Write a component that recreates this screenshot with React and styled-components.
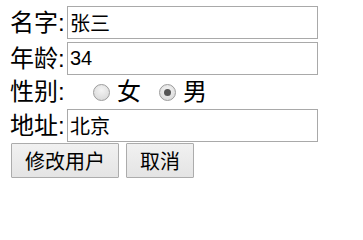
import React from 'react';
import styled, { createGlobalStyle } from 'styled-components';

const GlobalStyle = createGlobalStyle`
  body {
    margin: 0;
    background: #ffffff;
    font-family: "Liberation Sans", "Noto Sans CJK SC", sans-serif;
    color: #000000;
  }
`;

const Form = styled.form`
  display: flex;
  flex-direction: column;
  padding: 6px 0 0 10px;
`;

const Row = styled.div`
  display: flex;
  align-items: center;
  height: ${(p) => p.h || 33}px;
  margin-top: ${(p) => p.gap || 0}px;
`;

const Label = styled.span`
  width: 57px;
  font-size: 24px;
  line-height: 1;
  white-space: nowrap;
`;

const TextInput = styled.input`
  box-sizing: border-box;
  width: 251px;
  height: 33px;
  margin: 0;
  padding: 1px 2px;
  border: 1px solid #a9a9a9;
  font-family: "Liberation Sans", "Noto Sans CJK SC", sans-serif;
  font-size: 20px;
  color: #000000;
  outline: none;
`;

const Radio = styled.input`
  appearance: none;
  box-sizing: border-box;
  width: 17px;
  height: 17px;
  margin: 0 7px 0 ${(p) => p.offset}px;
  border-radius: 50%;
  border: 1px solid #9c9c9c;
  background: radial-gradient(circle at 50% 35%, #f4f4f4, #d4d4d4);
  display: grid;
  place-items: center;

  &:checked::after {
    content: '';
    width: 7px;
    height: 7px;
    border-radius: 50%;
    background: #555555;
  }
`;

const Choice = styled.span`
  font-size: 24px;
  line-height: 1;
`;

const Actions = styled.div`
  display: flex;
  gap: 7px;
  margin-top: 1px;
  padding-left: 1px;
`;

const Button = styled.button`
  box-sizing: border-box;
  height: 35px;
  padding: 0 13px;
  border: 1px solid #acacac;
  border-radius: 1px;
  background: linear-gradient(#f1f1f1, #e4e4e4);
  font-family: "Liberation Sans", "Noto Sans CJK SC", sans-serif;
  font-size: 20px;
  color: #000000;
`;

export default function App() {
  return (
    <>
      <GlobalStyle />
      <Form onSubmit={(e) => e.preventDefault()}>
        <Row>
          <Label>名字:</Label>
          <TextInput defaultValue="张三" />
        </Row>
        <Row gap={3}>
          <Label>年龄:</Label>
          <TextInput defaultValue="34" />
        </Row>
        <Row h={34}>
          <Label>性别:</Label>
          <Radio type="radio" name="sex" offset={26} />
          <Choice>女</Choice>
          <Radio type="radio" name="sex" offset={18} defaultChecked />
          <Choice>男</Choice>
        </Row>
        <Row>
          <Label>地址:</Label>
          <TextInput defaultValue="北京" />
        </Row>
        <Actions>
          <Button type="button">修改用户</Button>
          <Button type="button">取消</Button>
        </Actions>
      </Form>
    </>
  );
}
